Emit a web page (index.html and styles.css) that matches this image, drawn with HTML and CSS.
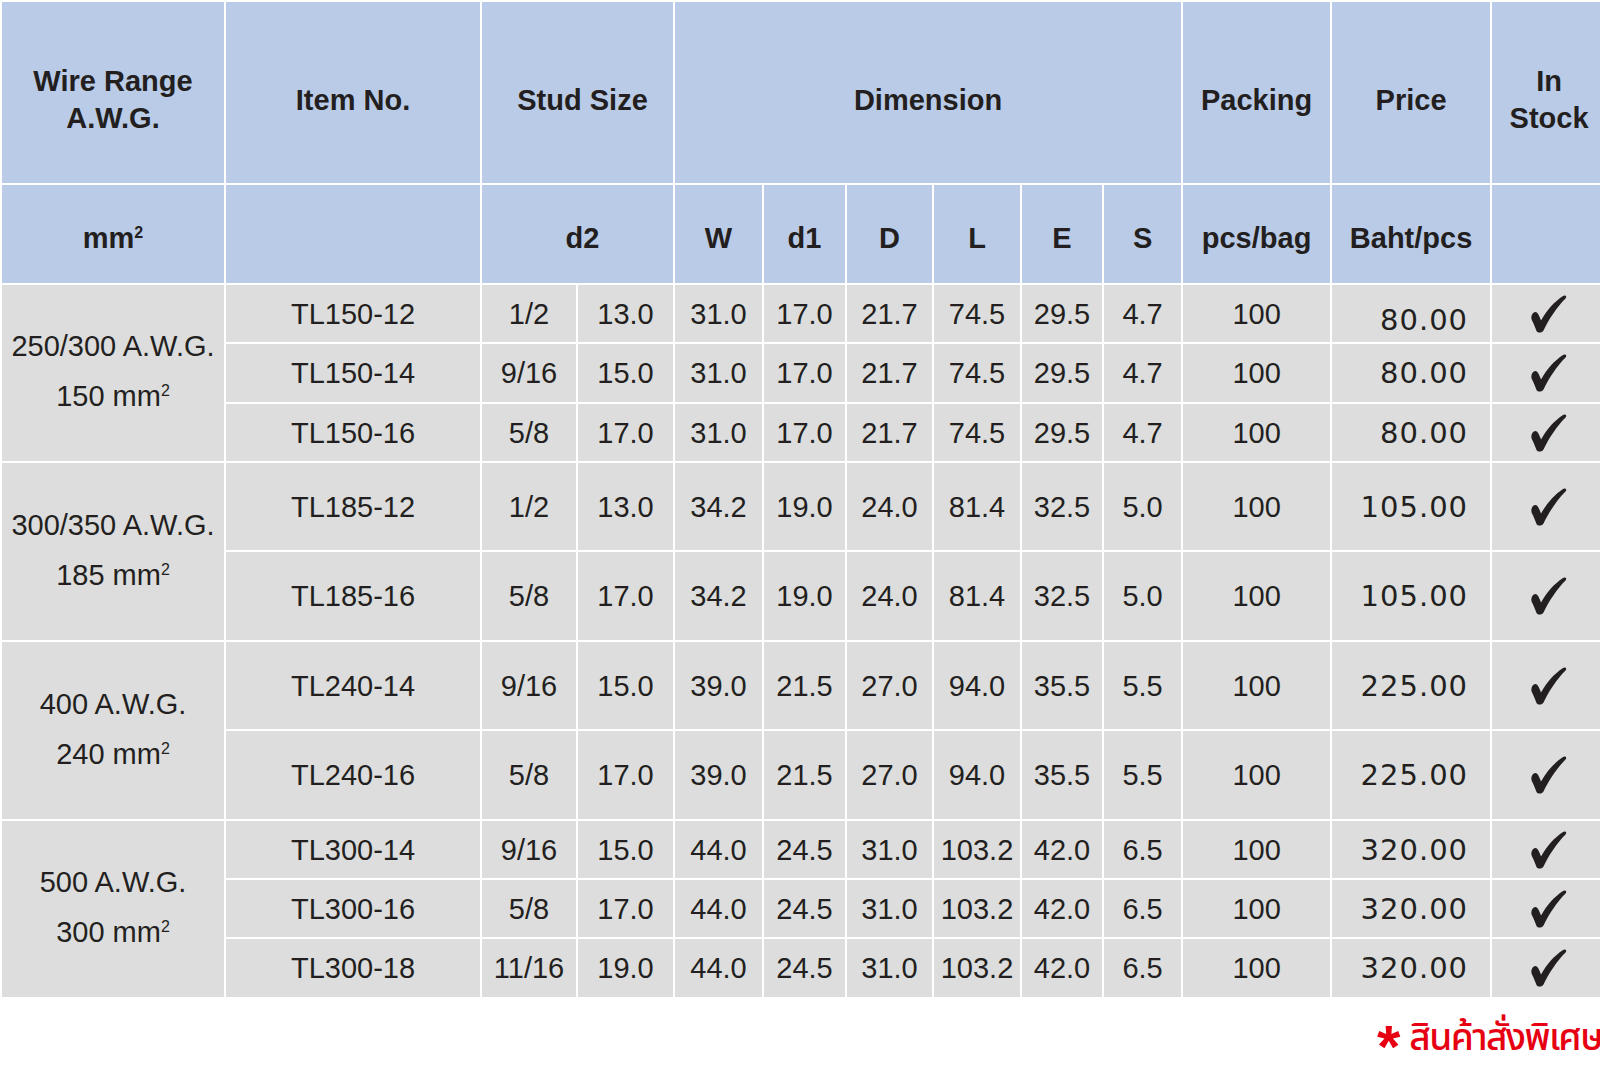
FILE: index.html
```html
<!DOCTYPE html>
<html lang="en">
<head>
<meta charset="utf-8">
<title>TL Terminal Lugs – Price List</title>
<link rel="stylesheet" href="styles.css">
</head>
<body>
<svg class="defs" width="0" height="0" aria-hidden="true">
  <symbol id="chk" viewBox="0 0 36 38">
    <path d="M34 0.5 C35.5 1 35.5 2.5 34.5 3.5 C26 12 18 24 12.5 35.5 C11.5 37.8 7 38.5 5.5 36 C4 32 2.5 28 0.8 25 C-0.5 22 1 17.5 4 17 C6.5 16.8 8 20 10 25.5 C16 15 23 7 32 1 C32.7 0.5 33.4 0.3 34 0.5 Z"/>
  </symbol>
</svg>
<div class="page">
<table class="spec">
  <colgroup>
    <col class="c-wire"><col class="c-item"><col class="c-frac"><col class="c-d2"><col class="c-w"><col class="c-d1"><col class="c-dd"><col class="c-l"><col class="c-e"><col class="c-s"><col class="c-pack"><col class="c-price"><col class="c-stock">
  </colgroup>
  <thead>
    <tr class="h1">
      <th>Wire Range<br>A.W.G.</th>
      <th>Item No.</th>
      <th colspan="2" class="shift">Stud Size</th>
      <th colspan="6">Dimension</th>
      <th>Packing</th>
      <th>Price</th>
      <th>In<br>Stock</th>
    </tr>
    <tr class="h2">
      <th>mm<sup>2</sup></th>
      <th></th>
      <th colspan="2" class="shift">d2</th>
      <th>W</th><th>d1</th><th>D</th><th>L</th><th>E</th><th>S</th>
      <th>pcs/bag</th>
      <th>Baht/pcs</th>
      <th></th>
    </tr>
  </thead>
  <tbody>
    <tr class="r57">
      <td rowspan="3" class="wire">250/300 A.W.G.<br>150 mm<sup>2</sup></td>
      <td>TL150-12</td><td>1/2</td><td>13.0</td><td>31.0</td><td>17.0</td><td>21.7</td><td>74.5</td><td>29.5</td><td>4.7</td><td>100</td>
      <td class="price low">80.00</td><td><svg class="check"><use href="#chk"/></svg></td>
    </tr>
    <tr class="r58">
      <td>TL150-14</td><td>9/16</td><td>15.0</td><td>31.0</td><td>17.0</td><td>21.7</td><td>74.5</td><td>29.5</td><td>4.7</td><td>100</td>
      <td class="price">80.00</td><td><svg class="check"><use href="#chk"/></svg></td>
    </tr>
    <tr class="r57">
      <td>TL150-16</td><td>5/8</td><td>17.0</td><td>31.0</td><td>17.0</td><td>21.7</td><td>74.5</td><td>29.5</td><td>4.7</td><td>100</td>
      <td class="price">80.00</td><td><svg class="check"><use href="#chk"/></svg></td>
    </tr>
    <tr class="r87">
      <td rowspan="2" class="wire">300/350 A.W.G.<br>185 mm<sup>2</sup></td>
      <td>TL185-12</td><td>1/2</td><td>13.0</td><td>34.2</td><td>19.0</td><td>24.0</td><td>81.4</td><td>32.5</td><td>5.0</td><td>100</td>
      <td class="price">105.00</td><td><svg class="check"><use href="#chk"/></svg></td>
    </tr>
    <tr class="r88">
      <td>TL185-16</td><td>5/8</td><td>17.0</td><td>34.2</td><td>19.0</td><td>24.0</td><td>81.4</td><td>32.5</td><td>5.0</td><td>100</td>
      <td class="price">105.00</td><td><svg class="check"><use href="#chk"/></svg></td>
    </tr>
    <tr class="r87">
      <td rowspan="2" class="wire">400 A.W.G.<br>240 mm<sup>2</sup></td>
      <td>TL240-14</td><td>9/16</td><td>15.0</td><td>39.0</td><td>21.5</td><td>27.0</td><td>94.0</td><td>35.5</td><td>5.5</td><td>100</td>
      <td class="price">225.00</td><td><svg class="check"><use href="#chk"/></svg></td>
    </tr>
    <tr class="r88">
      <td>TL240-16</td><td>5/8</td><td>17.0</td><td>39.0</td><td>21.5</td><td>27.0</td><td>94.0</td><td>35.5</td><td>5.5</td><td>100</td>
      <td class="price">225.00</td><td><svg class="check"><use href="#chk"/></svg></td>
    </tr>
    <tr class="r57">
      <td rowspan="3" class="wire">500 A.W.G.<br>300 mm<sup>2</sup></td>
      <td>TL300-14</td><td>9/16</td><td>15.0</td><td>44.0</td><td>24.5</td><td>31.0</td><td>103.2</td><td>42.0</td><td>6.5</td><td>100</td>
      <td class="price">320.00</td><td><svg class="check"><use href="#chk"/></svg></td>
    </tr>
    <tr class="r57">
      <td>TL300-16</td><td>5/8</td><td>17.0</td><td>44.0</td><td>24.5</td><td>31.0</td><td>103.2</td><td>42.0</td><td>6.5</td><td>100</td>
      <td class="price">320.00</td><td><svg class="check"><use href="#chk"/></svg></td>
    </tr>
    <tr class="r58">
      <td>TL300-18</td><td>11/16</td><td>19.0</td><td>44.0</td><td>24.5</td><td>31.0</td><td>103.2</td><td>42.0</td><td>6.5</td><td>100</td>
      <td class="price">320.00</td><td><svg class="check"><use href="#chk"/></svg></td>
    </tr>
  </tbody>
</table>
<p class="note"><span class="star">*</span><span class="thai" lang="th">สินค้าสั่งพิเศษ</span></p>
</div>
</body>
</html>
```

FILE: styles.css
```css
html, body {
  margin: 0;
  padding: 0;
  background: #ffffff;
}

body {
  width: 1600px;
  height: 1076px;
  overflow: hidden;
  font-family: "Liberation Sans", Arial, Helvetica, sans-serif;
  color: #231f20;
}

.defs {
  position: absolute;
  width: 0;
  height: 0;
  overflow: hidden;
}

.page {
  width: 1600px;
  overflow: hidden;
}

.spec {
  table-layout: fixed;
  width: 1608px;
  border-collapse: separate;
  border-spacing: 2px;
  background: #ffffff;
}

.c-wire  { width: 222px; }
.c-item  { width: 254px; }
.c-frac  { width: 94px; }
.c-d2    { width: 95px; }
.c-w     { width: 87px; }
.c-d1    { width: 81px; }
.c-dd    { width: 85px; }
.c-l     { width: 86px; }
.c-e     { width: 80px; }
.c-s     { width: 77px; }
.c-pack  { width: 147px; }
.c-price { width: 158px; }
.c-stock { width: 114px; }

.spec th,
.spec td {
  padding: 0;
  text-align: center;
  vertical-align: middle;
  font-size: 29px;
  line-height: 34px;
  white-space: nowrap;
}

.spec th {
  background: #bacbe7;
  font-weight: bold;
}

.spec td {
  background: #dcdddc;
  font-weight: normal;
}

.h1 { height: 181px; }
.h1 th {
  padding-top: 15px;
  line-height: 37px;
}

.h2 { height: 98px; }
.h2 th {
  padding-top: 8px;
}

.spec th.shift {
  padding-left: 10px;
}

.r57 { height: 57px; }
.r58 { height: 58px; }
.r87 { height: 87px; }
.r88 { height: 88px; }

.spec td.wire {
  line-height: 50px;
  padding-bottom: 4px;
}

sup {
  font-size: 16px;
  line-height: 0;
  vertical-align: 10px;
}

.spec td.price {
  font-family: "DejaVu Sans", "Liberation Sans", sans-serif;
  font-size: 29px;
  letter-spacing: 1px;
  text-align: right;
  padding-right: 22px;
}

.spec td.price.low {
  padding-top: 12px;
}

.check {
  display: block;
  width: 36px;
  height: 38px;
  margin: 0 auto;
  fill: #231f20;
}

.note {
  margin: 14px 0 0 1377px;
  white-space: nowrap;
  color: #e60012;
  font-size: 37px;
  line-height: 50px;
}

.star {
  font-family: "Liberation Sans", Arial, sans-serif;
  font-weight: bold;
  font-size: 60px;
  vertical-align: -17px;
  margin-right: 9px;
}

.thai {
  font-family: "Noto Sans Thai", "Noto Sans Thai Looped", "Leelawadee UI", "Tahoma", "Noto Sans", sans-serif;
  font-weight: 500;
  letter-spacing: -1.6px;
}
```
